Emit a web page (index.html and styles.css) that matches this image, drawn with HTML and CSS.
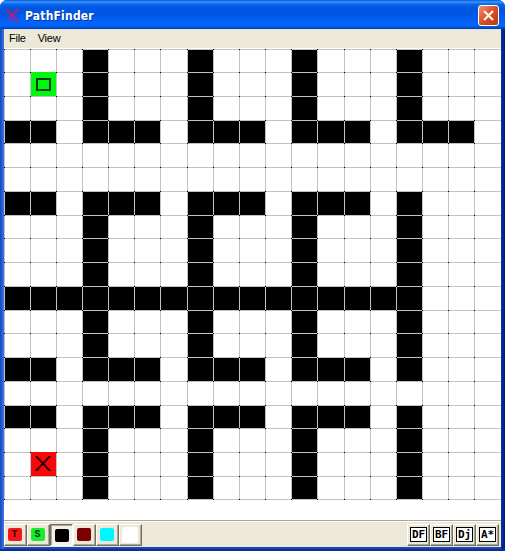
FILE: index.html
```html
<!DOCTYPE html>
<html lang="en">
<head>
<meta charset="utf-8">
<title>PathFinder</title>
<link rel="stylesheet" href="styles.css">
</head>
<body>
<div class="window">
  <header class="titlebar">
    <svg class="logo" width="15" height="15" viewBox="0 0 15 15"><path d="M1 1l1 3 4 2 2 3M12 1L9 4 6 7" fill="none" stroke="#c41c5a" stroke-width="1.8"/><path d="M2 8h3l-1 3-3 1M7 9l-1 4M9 9l3 3M6 13l3-1 4 1" fill="none" stroke="#8c2fa8" stroke-width="1.4"/></svg>
    <h1 class="title">PathFinder</h1>
    <button class="close" aria-label="Close"><svg width="19" height="19" viewBox="0 0 19 19"><path d="M5 5l9 9M14 5l-9 9" stroke="#fff3e8" stroke-width="2.3"/></svg></button>
  </header>
  <nav class="menu"><span>File</span><span>View</span></nav>
  <main class="board" id="board"></main>
  <footer class="toolbar">
    <button class="tool"><span class="swatch red">T</span></button>
    <button class="tool"><span class="swatch green">S</span></button>
    <button class="tool pressed"><span class="swatch black"></span></button>
    <button class="tool"><span class="swatch maroon"></span></button>
    <button class="tool"><span class="swatch cyan"></span></button>
    <button class="tool"><span class="swatch white"></span></button>
    <div class="spacer"></div>
    <button class="tool algo"><span class="label">DF</span></button>
    <button class="tool algo"><span class="label">BF</span></button>
    <button class="tool algo"><span class="label">Dj</span></button>
    <button class="tool algo"><span class="label">A*</span></button>
  </footer>
</div>
<script src="board.js"></script>
</body>
</html>
```
FILE: board.js
```js
const map = [
  "...#...#...#...#...",
  ".S.#...#...#...#...",
  "...#...#...#...#...",
  "##.###.###.###.###.",
  "...................",
  "...................",
  "##.###.###.###.#...",
  "...#...#...#...#...",
  "...#...#...#...#...",
  "...#...#...#...#...",
  "################...",
  "...#...#...#...#...",
  "...#...#...#...#...",
  "##.###.###.###.#...",
  "...................",
  "##.###.###.###.#...",
  "...#...#...#...#...",
  ".T.#...#...#...#...",
  "...#...#...#...#..."
];
const kinds = { "#": " wall", S: " start", T: " target" };
const marks = {
  S: '<svg width="15" height="13" viewBox="0 0 15 13"><path d="M1 1h13v11H1z" fill="none" stroke="#063c06" stroke-width="2"/></svg>',
  T: '<svg width="16" height="15" viewBox="0 0 16 15"><path d="M1 0l14 15M15 0L1 15" stroke="#2c0000" stroke-width="1.9"/></svg>'
};
document.getElementById("board").innerHTML = map.map(row =>
  [...row].map(c => `<div class="cell${kinds[c] || ""}">${marks[c] || ""}</div>`).join("")
).join("") + '<div class="cell edge"></div>'.repeat(19);
```
FILE: styles.css
```css
* { box-sizing: border-box; }
body { margin: 0; background: #fff; font-family: "Liberation Sans", Arial, sans-serif; overflow: hidden; }
button { margin: 0; padding: 0; border: 0; }
.window {
  width: 505px; height: 551px; padding: 0 4px 4px;
  display: flex; flex-direction: column;
  border-radius: 7px 7px 0 0;
  background: linear-gradient(90deg, #1c46b0 0, #245edb 2px, #3f78e4 4px, #1a45b8 4px, #1a45b8 501px, #0a31a5 501px, #001b82 505px);
  box-shadow: inset 0 -2px #0b2f92;
}
.titlebar {
  height: 29px; flex: none; margin: 0 -4px; padding: 2px 6px 0 6px;
  display: flex; align-items: center;
  border-radius: 7px 7px 0 0;
  background: linear-gradient(#0759d5 0, #3c95ff 2px, #0969ee 4px, #0055e0 8px, #0055e3 14px, #0264fa 22px, #0165fb 26px, #0347bd 28px, #0239a5 29px);
}
.logo { flex: none; }
.title { margin: 0 0 0 4px; padding-top: 1px; flex: 1; color: #fff; font: bold 12px/16px "DejaVu Sans Condensed", "DejaVu Sans", sans-serif; letter-spacing: 0.2px; text-shadow: 1px 1px #06369b; }
.close { width: 21px; height: 21px; border: 1px solid #fff; border-radius: 3px; background: linear-gradient(135deg, #ee9174, #dc4d27 50%, #b9370f); }
.close svg { display: block; }
.menu { height: 20px; flex: none; padding: 1px 5px 0; display: flex; gap: 12px; background: #ece9d8; border-top: 1px solid #dfe4f3; border-bottom: 1px solid #fff; color: #000; font-size: 11px; line-height: 14px; letter-spacing: -0.25px; }
.board {
  height: 471px; flex: none; display: grid; align-content: start; background: #fff;
  grid-template-columns: repeat(6, 26px) 27px repeat(5, 26px) 27px repeat(5, 26px) 27px;
  grid-template-rows: 23px 24px 24px 23px 24px 24px 24px 23px 24px 24px 24px 23px 24px 24px 24px 23px 24px 24px 23px 1px;
}
.cell { position: relative; border-left: 1px solid #c3c3c3; border-top: 1px solid #c3c3c3; display: grid; place-items: center; min-height: 0; }
.cell::before { content: ""; position: absolute; left: -1px; top: -1px; width: 1px; height: 1px; background: #000; }
.edge { border-left: 0; }
.edge::before { left: 0; }
.wall { background: #000; }
.start { background: #00f810; border-top-color: #00f810; }
.target { background: #f80808; border-top-color: #f80808; padding: 0 2px 2px 0; }
.toolbar { height: 27px; flex: none; display: flex; background: #ece9d8; border-top: 1px solid #aca899; padding: 3px 2px 0 0; box-shadow: inset 0 1px #fff; }
.spacer { flex: 1; }
.tool { width: 23px; height: 22px; flex: none; display: grid; place-items: center; background: #ece9d8; border: 1px solid; border-color: #fff #716f64 #716f64 #fff; box-shadow: inset -1px -1px #aca899; padding: 0 2px 1px 0; }
.pressed { border-color: #716f64 #fff #fff #716f64; box-shadow: inset 1px 1px #aca899; background: #f3f1e9; padding: 1px 0 0 1px; }
.algo { padding-right: 0; }
.swatch { width: 14px; height: 13px; border-radius: 2px; color: #300; font: bold 10px/13px "Liberation Mono", monospace; text-align: center; }
.red { background: #f31717; }
.green { background: #16ee2c; color: #032; }
.black { background: #000; }
.maroon { background: #7c0000; }
.cyan { background: #00f5ff; }
.white { background: #fff; width: 16px; height: 16px; }
.label { width: 17px; height: 15px; border: 1px solid #000; background: #fff; color: #000; font: bold 11px/13px "DejaVu Sans Mono", monospace; letter-spacing: 0; display: flex; justify-content: center; }
```
